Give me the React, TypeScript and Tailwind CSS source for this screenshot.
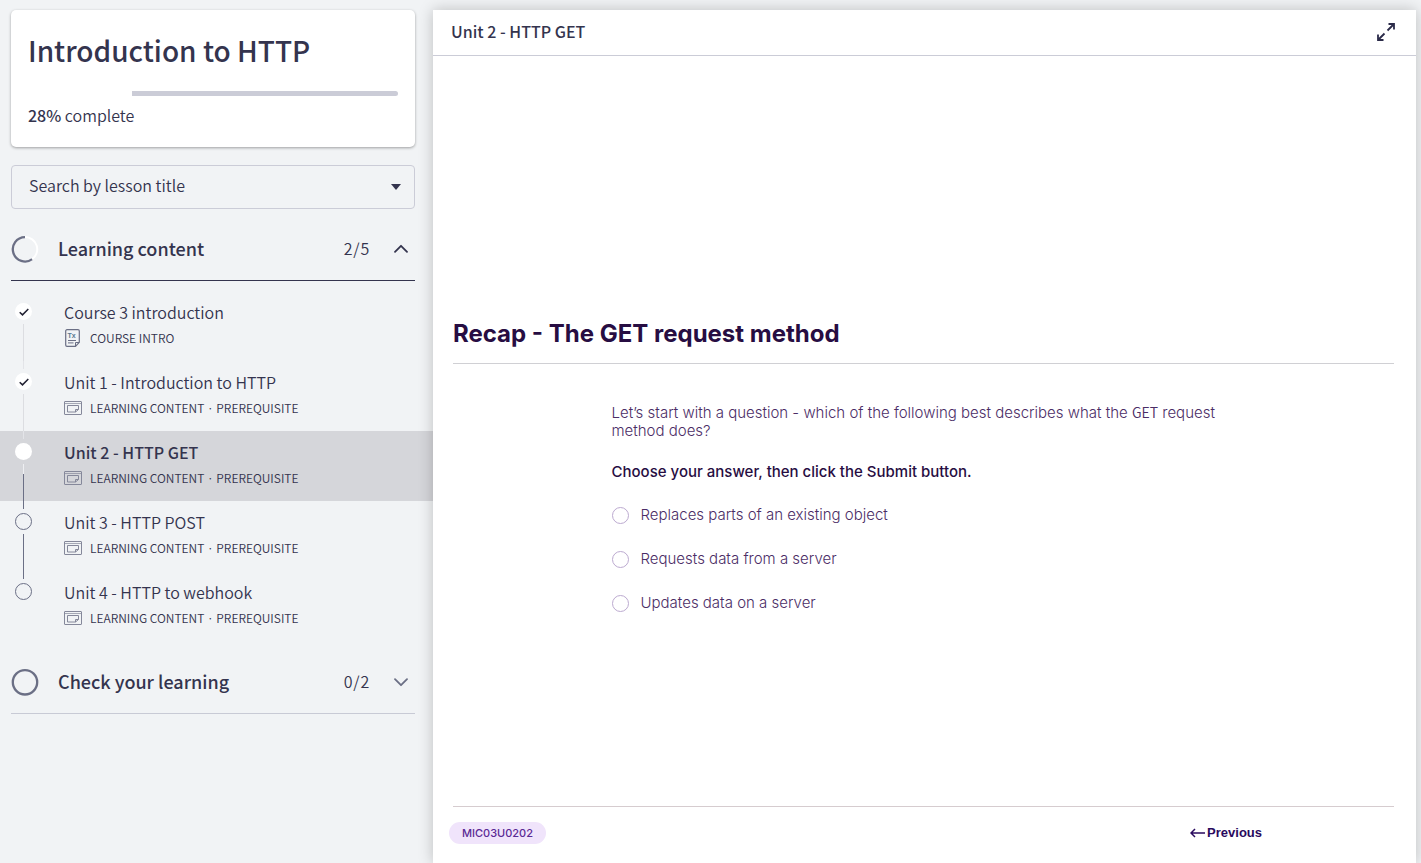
import React from "react";

type LessonState = "done" | "current" | "todo";

interface Lesson {
  title: string;
  meta: string;
  kind: "text" | "content";
  state: LessonState;
}

const lessons: Lesson[] = [
  { title: "Course 3 introduction", meta: "COURSE INTRO", kind: "text", state: "done" },
  { title: "Unit 1 - Introduction to HTTP", meta: "LEARNING CONTENT · PREREQUISITE", kind: "content", state: "done" },
  { title: "Unit 2 - HTTP GET", meta: "LEARNING CONTENT · PREREQUISITE", kind: "content", state: "current" },
  { title: "Unit 3 - HTTP POST", meta: "LEARNING CONTENT · PREREQUISITE", kind: "content", state: "todo" },
  { title: "Unit 4 - HTTP to webhook", meta: "LEARNING CONTENT · PREREQUISITE", kind: "content", state: "todo" },
];

const answers = [
  "Replaces parts of an existing object",
  "Requests data from a server",
  "Updates data on a server",
];

function TextIcon() {
  return (
    <svg className="h-[18px] w-[18px] shrink-0" viewBox="0 0 18 18" fill="none" stroke="#6b6f85" aria-hidden="true">
      <path d="M3 .7h11a1.300 1.300 0 0 1 1.300 1.300v11.300l-3.800 4H3A1.300 1.300 0 0 1 1.700 16V2A1.300 1.300 0 0 1 3 .7z" strokeWidth="1.200" />
      <path d="M11.500 17v-3.500h3.600M4 11.500h8M4 13.900h5.500" strokeWidth="1" />
      <text x="3.600" y="8.600" fontSize="7" fontWeight="bold" fontFamily="Liberation Sans, sans-serif" fill="#5a7890" stroke="none">Tx</text>
    </svg>
  );
}

function ContentIcon() {
  return (
    <svg className="h-[18px] w-[18px] shrink-0" viewBox="0 0 18 18" fill="none" stroke="#85889a" aria-hidden="true">
      <rect x=".5" y="2.500" width="17" height="13" rx=".4" />
      <path d="M.5 4.500h17" strokeOpacity=".7" />
      <path d="M14.500 10.500v-4h-11v6.500h8l3-2.500h-3v2.500" />
    </svg>
  );
}

function ProgressRing({ done }: { done: boolean }) {
  return (
    <svg className="h-7 w-7 shrink-0" viewBox="0 0 28 28" fill="none" strokeWidth="2.300" aria-hidden="true">
      {!done && <circle cx="14" cy="14.300" r="12.200" stroke="#6b6f85" />}
      {done && <path d="M21.200 24.170A12.200 12.200 0 1 1 14 2.100" stroke="#6b6f85" />}
      {done && <path d="M14 2.100A12.200 12.200 0 0 1 21.200 24.170" stroke="#ffffff" strokeWidth="2" />}
    </svg>
  );
}

function SectionHeader({ title, count, open }: { title: string; count: string; open: boolean }) {
  return (
    <h2 className={open ? "mx-[11px] border-b border-[#34344e]" : "mx-[11px] border-b border-[#c8cad5]"}>
      <button type="button" aria-expanded={open} className="flex h-[62px] w-full items-center text-left text-[#34344e]">
        <ProgressRing done={open} />
        <span className="ml-[19px] flex-1 pb-[2px] text-[18px] leading-6 font-medium">{title}</span>
        <span className="mr-6 pb-[2px] text-[16px] leading-6 font-[350] tracking-wider">{count}</span>
        <svg className="mr-[7px] h-[14px] w-[14px]" viewBox="0 0 14 14" fill="none" stroke={open ? "#34344e" : "#6b6f85"} strokeWidth="1.800" strokeLinecap="round" strokeLinejoin="round" aria-hidden="true">
          <path d={open ? "M1 9.800l6-6 6 6" : "M1 4.200l6 6 6-6"} />
        </svg>
      </button>
    </h2>
  );
}

function Marker({ state }: { state: LessonState }) {
  if (state === "done") {
    return (
      <span className="flex h-[17px] w-[17px] items-center justify-center rounded-full bg-white">
        <svg className="h-[10px] w-[10px]" viewBox="0 0 10 10" fill="none" stroke="#222233" strokeWidth="1.500" aria-hidden="true">
          <path d="M.7 5.200l2.800 2.700L9.300 2" />
        </svg>
      </span>
    );
  }
  if (state === "current") return <span className="h-[17px] w-[17px] rounded-full bg-white" />;
  return <span className="h-[17px] w-[17px] rounded-full border border-[#6b6f85]" />;
}

function LessonRow({ lesson, first, last }: { lesson: Lesson; first: boolean; last: boolean }) {
  const { state } = lesson;
  return (
    <li>
      <a
        href="#lesson"
        aria-current={state === "current" ? "page" : undefined}
        className={state === "current" ? "flex h-[70px] bg-[#d5d6da] pl-[15px]" : "flex h-[70px] pl-[15px]"}
      >
        <span className="flex w-[17px] flex-col items-center">
          <span className={first ? "h-2 w-px" : state === "todo" ? "h-2 w-px bg-[#6b6f85]" : "h-2 w-px bg-[#e3e4e8]"} />
          <span className="my-1 flex">
            <Marker state={state} />
          </span>
          {state === "current" && <span className="h-[10px] w-px bg-[#eeeff2]" />}
          {!last && (
            <span className={state === "done" ? "w-px flex-1 bg-[#dcdde1]" : "w-px flex-1 bg-[#6b6f85]"} />
          )}
        </span>
        <span className="ml-8 flex flex-col pt-[9px] text-[#34344e]">
          <span className={state === "current" ? "text-[16px] leading-6 font-medium" : "text-[16px] leading-6 font-[350]"}>{lesson.title}</span>
          <span className="flex items-center gap-2 pt-1">
            {lesson.kind === "text" ? <TextIcon /> : <ContentIcon />}
            <span className="text-[12px] leading-5 font-[350]">{lesson.meta}</span>
          </span>
        </span>
      </a>
    </li>
  );
}

function Sidebar() {
  return (
    <aside className="w-[433px] shrink-0 pt-[10px] font-['Noto_Sans_CJK_JP',sans-serif] text-[#34344e]">
      <div className="mx-[11px] mr-[18px] rounded-[5px] bg-white px-[17px] pt-5 pb-5 shadow-[0_1px_3px_rgba(0,0,0,0.35)]">
        <h1 className="text-[28px] leading-10 font-medium">Introduction to HTTP</h1>
        <div className="mt-[21px] flex h-[5px] overflow-hidden rounded-[3px]" role="progressbar" aria-valuenow={28} aria-valuemin={0} aria-valuemax={100} aria-label="Course progress">
          <span className="w-[28%] bg-white" />
          <span className="flex-1 bg-[#cbccd7]" />
        </div>
        <p className="mt-[7px] text-[16px] leading-6 font-[350]">
          <span className="font-medium">28%</span> complete
        </p>
      </div>
      <div className="mx-[11px] mt-[18px] mr-[18px] flex h-11 items-center rounded-[4px] border border-[#cbccd7] pr-[13px] pl-[17px]">
        <input
          type="text"
          aria-label="Search by lesson title"
          placeholder="Search by lesson title"
          className="min-w-0 flex-1 bg-transparent pb-1 text-[16px] leading-6 font-[350] outline-none placeholder:text-[#34344e]"
        />
        <svg className="h-[6px] w-[10px]" viewBox="0 0 10 6" fill="#34344e" aria-hidden="true">
          <path d="M0 0h10L5 6z" />
        </svg>
      </div>
      <div className="mt-[9px] mr-[7px]">
        <SectionHeader title="Learning content" count="2/5" open />
      </div>
      <ul className="py-[10px]">
        {lessons.map((lesson, i) => (
          <LessonRow key={lesson.title} lesson={lesson} first={i === 0} last={i === lessons.length - 1} />
        ))}
      </ul>
      <div className="mr-[7px]">
        <SectionHeader title="Check your learning" count="0/2" open={false} />
      </div>
    </aside>
  );
}

export default function App() {
  return (
    <div className="flex min-h-screen overflow-hidden bg-[#f1f3f5]">
      <Sidebar />
      <main className="mt-[10px] mr-[5px] flex min-w-0 flex-1 flex-col bg-white shadow-[0_0_14px_rgba(0,0,0,0.22)]">
        <header className="flex h-[46px] items-center justify-between border-b border-[#cbccd7] pr-[21px] pb-[2px] pl-[18px]">
          <h2 className="pb-px font-['Noto_Sans_CJK_JP',sans-serif] text-[16px] leading-6 font-medium text-[#34344e]">Unit 2 - HTTP GET</h2>
          <button type="button" aria-label="Expand" className="flex">
            <svg className="h-[18px] w-[18px]" viewBox="0 0 18 18" fill="none" stroke="#2b2b49" strokeWidth="1.800" aria-hidden="true">
              <path d="M11.500 1H17v5.500M17 1l-6.500 6.500M1 11.500V17h5.500M1 17l6.500-6.500" />
            </svg>
          </button>
        </header>
        <section className="flex-1 pt-[260px] pr-[22px] pl-5 font-[Inter,sans-serif] text-[#4b2d66]">
          <h3 className="border-b border-[#d0d0d4] pb-[11px] text-[24px] leading-9 font-bold text-[#270d42]">Recap - The GET request method</h3>
          <form className="mx-auto mt-10 max-w-[624px] text-[15px]">
            <p className="leading-[18px] font-light">
              Let’s start with a question - which of the following best describes what the{" "}
              <code className="font-['Noto_Sans_CJK_JP',sans-serif] text-[14px] leading-none font-[350]">GET</code> request method does?
            </p>
            <p className="mt-[22px] leading-5 font-medium text-[#270d42]">Choose your answer, then click the Submit button.</p>
            <div className="mt-[23px] flex flex-col gap-6">
              {answers.map((answer) => (
                <label key={answer} className="flex items-center gap-3 leading-5 font-light">
                  <input type="radio" name="answer" className="h-[17px] w-[17px] appearance-none rounded-full border border-[#bcaad0] bg-white" />
                  {answer}
                </label>
              ))}
            </div>
          </form>
        </section>
        <footer className="mr-[22px] ml-5 flex h-[57px] items-center justify-between border-t border-[#d6cccf] pb-[5px] font-[Inter,sans-serif]">
          <span className="-ml-1 rounded-full bg-[#f0e4fb] px-[13px] text-[11px] leading-[22px] font-medium text-[#5b2a95]">MIC03U0202</span>
          <button type="button" className="mr-[132px] flex items-center gap-[2px] font-['Liberation_Sans',sans-serif] text-[13px] leading-5 font-bold text-[#2a0a5e]">
            <svg className="h-[10px] w-[15px]" viewBox="0 0 15 10" fill="none" stroke="#2a0a5e" strokeWidth="1.500" aria-hidden="true">
              <path d="M15 5H1M5 1L1 5l4 4" />
            </svg>
            Previous
          </button>
        </footer>
      </main>
    </div>
  );
}
